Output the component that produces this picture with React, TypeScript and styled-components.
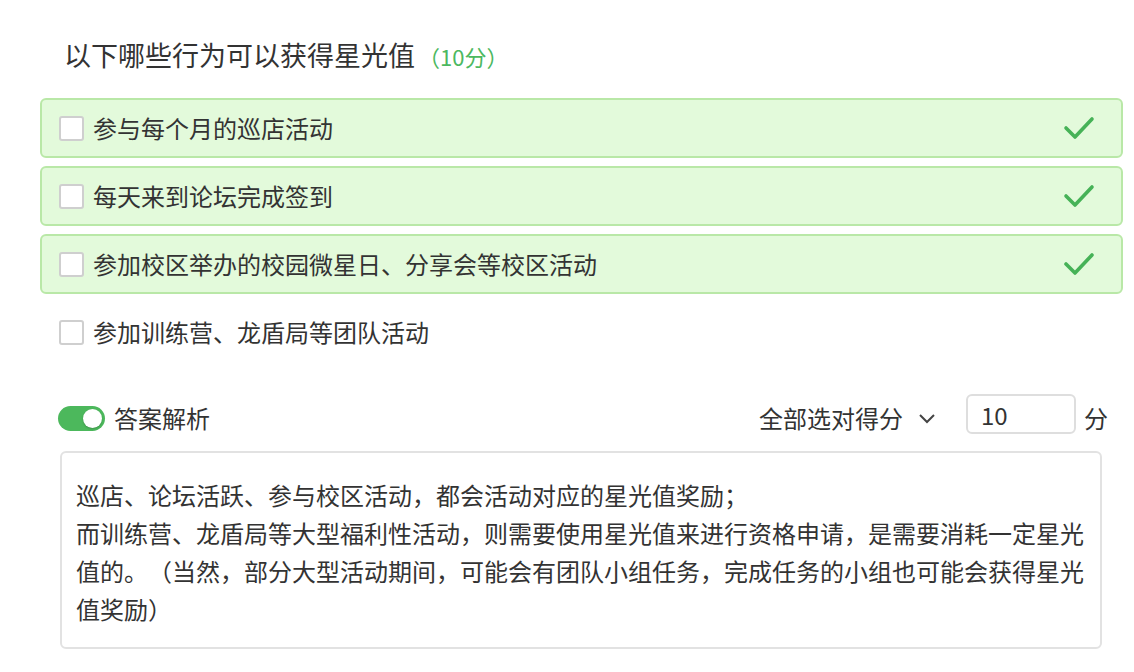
import React, { useState } from 'react'
import styled, { createGlobalStyle } from 'styled-components'

const GlobalStyle = createGlobalStyle`
  body {
    margin: 0;
    background: #fff;
    font-family: "Noto Sans CJK SC", "Noto Sans", sans-serif;
    color: #333;
    text-spacing-trim: space-all;
  }
`

const Page = styled.div`
  padding: 37px 11px 0 40px;
`

const Title = styled.h2`
  margin: 0 0 24px 24px;
  font-size: 27px;
  line-height: 36px;
  font-weight: 400;
  color: #333;
`

const Score = styled.span`
  font-size: 22px;
  color: #4cb860;
  margin-left: 3px;
`

const OptionList = styled.div`
  display: flex;
  flex-direction: column;
  gap: 8px;
`

const Option = styled.div<{ $correct?: boolean }>`
  display: flex;
  align-items: center;
  height: 60px;
  box-sizing: border-box;
  padding: 0 26px 0 17px;
  border: 2px solid ${(p) => (p.$correct ? '#b9e8a7' : 'transparent')};
  border-radius: 6px;
  background: ${(p) => (p.$correct ? '#e3fadb' : 'transparent')};
`

const Checkbox = styled.span`
  width: 25px;
  height: 25px;
  box-sizing: border-box;
  border: 2px solid #cfcfcf;
  border-radius: 3px;
  background: #fff;
  flex-shrink: 0;
`

const OptionText = styled.span`
  flex: 1;
  margin-left: 9px;
  font-size: 24px;
  line-height: 32px;
  color: #333;
`

const Footer = styled.div`
  display: flex;
  align-items: flex-end;
  margin: 32px 15px 0 18px;
`

const Toggle = styled.button<{ $on: boolean }>`
  width: 47px;
  height: 25px;
  padding: 3px;
  margin-bottom: 3px;
  border: none;
  border-radius: 13px;
  background: ${(p) => (p.$on ? '#4cb85c' : '#ccc')};
  display: flex;
  justify-content: ${(p) => (p.$on ? 'flex-end' : 'flex-start')};
  cursor: pointer;
  box-sizing: border-box;
`

const Knob = styled.span`
  width: 19px;
  height: 19px;
  border-radius: 50%;
  background: #fff;
  box-shadow: 0 1px 2px rgba(0, 0, 0, 0.2);
`

const Label = styled.span`
  font-size: 24px;
  line-height: 32px;
  color: #333;
`

const ToggleLabel = styled(Label)`
  margin-left: 9px;
  flex: 1;
`

const RuleSelect = styled.div`
  display: flex;
  align-items: center;
  gap: 15px;
  margin-right: 30px;
`

const ScoreInput = styled.input`
  width: 110px;
  height: 40px;
  box-sizing: border-box;
  border: 2px solid #dedede;
  border-radius: 6px;
  padding: 0 13px;
  font-family: inherit;
  font-size: 24px;
  color: #333;
  outline: none;
`

const Unit = styled(Label)`
  margin-left: 8px;
`

const Explanation = styled.div`
  margin: 17px 21px 0 20px;
  padding: 23px 14px 19px;
  border: 2px solid #e2e2e2;
  border-radius: 6px;
  font-size: 24px;
  line-height: 38px;
  color: #333;
`

const Check = () => (
  <svg width="32" height="24" viewBox="0 0 32 24">
    <polyline
      points="3,12 12,21 29,3"
      fill="none"
      stroke="#46b257"
      strokeWidth="3.6"
      strokeLinecap="round"
      strokeLinejoin="round"
    />
  </svg>
)

const Chevron = () => (
  <svg width="18" height="12" viewBox="0 0 18 12">
    <polyline points="2,3 9,10 16,3" fill="none" stroke="#444" strokeWidth="2" />
  </svg>
)

const options = [
  { text: '参与每个月的巡店活动', correct: true },
  { text: '每天来到论坛完成签到', correct: true },
  { text: '参加校区举办的校园微星日、分享会等校区活动', correct: true },
  { text: '参加训练营、龙盾局等团队活动', correct: false },
]

const App = () => {
  const [showAnswer, setShowAnswer] = useState(true)
  const [score, setScore] = useState('10')

  return (
    <Page>
      <GlobalStyle />
      <Title>
        以下哪些行为可以获得星光值<Score>（10分）</Score>
      </Title>
      <OptionList>
        {options.map((o) => (
          <Option key={o.text} $correct={o.correct}>
            <Checkbox />
            <OptionText>{o.text}</OptionText>
            {o.correct && <Check />}
          </Option>
        ))}
      </OptionList>
      <Footer>
        <Toggle $on={showAnswer} onClick={() => setShowAnswer(!showAnswer)}>
          <Knob />
        </Toggle>
        <ToggleLabel>答案解析</ToggleLabel>
        <RuleSelect>
          <Label>全部选对得分</Label>
          <Chevron />
        </RuleSelect>
        <ScoreInput value={score} onChange={(e) => setScore(e.target.value)} />
        <Unit>分</Unit>
      </Footer>
      {showAnswer && (
        <Explanation>
          巡店、论坛活跃、参与校区活动，都会活动对应的星光值奖励；
          <br />
          而训练营、龙盾局等大型福利性活动，则需要使用星光值来进行资格申请，是需要消耗一定星光值的。（当然，部分大型活动期间，可能会有团队小组任务，完成任务的小组也可能会获得星光值奖励）
        </Explanation>
      )}
    </Page>
  )
}

export default App
